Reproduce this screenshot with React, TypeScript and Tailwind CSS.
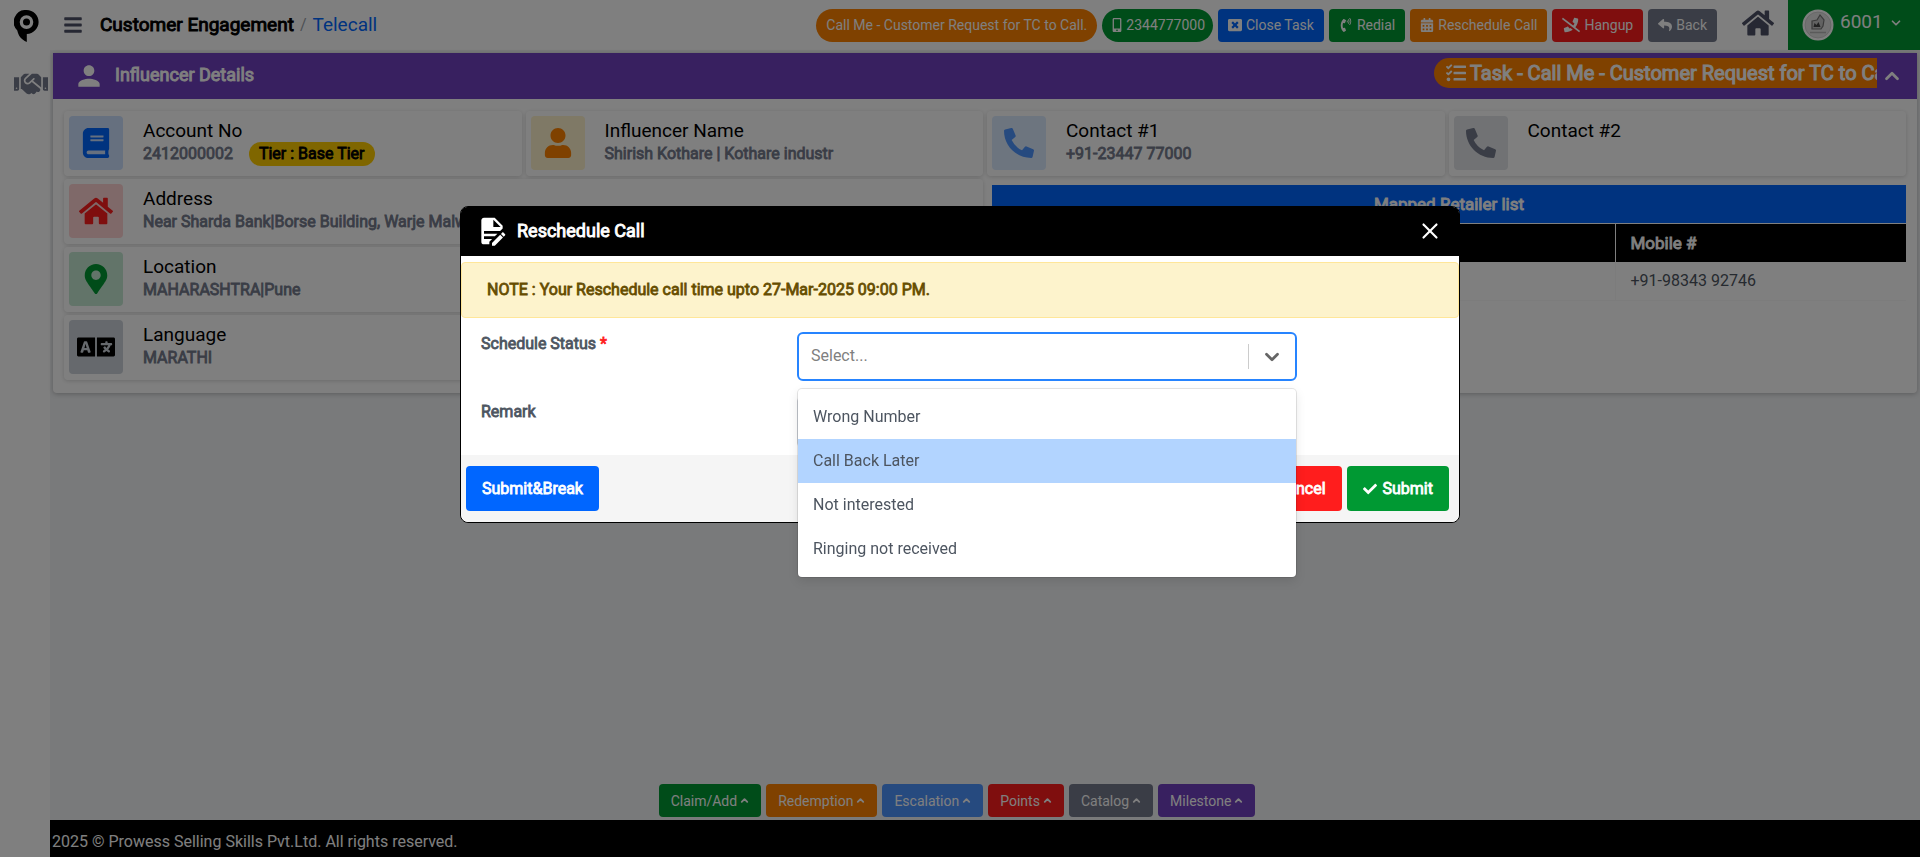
import React, { useState } from "react";
import {
  FaBars, FaBook, FaCalendarAlt, FaCheck, FaHandshake, FaHome, FaLanguage, FaMapMarkerAlt,
  FaMobileAlt, FaPhoneAlt, FaPhoneSlash, FaPhoneVolume, FaReply, FaTasks, FaUser, FaWindowClose, FaTimes,
} from "react-icons/fa";
import { MdPerson } from "react-icons/md";
import { ChevronDown, ChevronUp, X } from "lucide-react";

const statuses = ["Wrong Number", "Call Back Later", "Not interested", "Ringing not received"];

// Regular Roboto thickened with a thin outline, so emphasised text keeps the regular widths.
const strong = "font-normal [-webkit-text-stroke:0.05em_currentColor]";

function Logo() {
  return (
    <svg viewBox="0 0 25 32" className="h-8 w-[25px]" aria-hidden="true">
      <path
        fillRule="evenodd"
        d="M12.5 0C19.300 0 24.600 5.400 24.600 12C24.600 18.600 19.300 23.600 12.800 24.100V32C7 29.500 4.300 25.500 3.300 20.500A12 12 0 0 1 12.500 0ZM12.500 5.300a6.800 6.800 0 1 0 0 13.600a6.800 6.800 0 0 0 0-13.600Z"
        fill="#000"
      />
      <circle cx="12.500" cy="12.100" r="3.500" fill="#000" />
    </svg>
  );
}

function Avatar() {
  return (
    <svg viewBox="0 0 32 32" className="size-8" aria-hidden="true">
      <circle cx="16" cy="16" r="15.500" fill="#fff" />
      <circle cx="16" cy="16" r="13" fill="#e4e4e4" stroke="#c5c5c5" strokeWidth="0.700" />
      <path d="M10 12l5-1 3-5 4 5-1 6-2 3h-9z" fill="#c4c4c4" stroke="#777" strokeWidth="1.200" />
      <path d="M11.500 18l1-4 2 2 2-3 2 5z" fill="#444" />
      <path d="M8 23.500h16" stroke="#b5b5b5" strokeWidth="1.500" />
    </svg>
  );
}

function FileEdit() {
  return (
    <svg viewBox="0 0 24 24" className="size-8" fill="currentColor" aria-hidden="true">
      <path d="M6,2C4.890,2 4,2.890 4,4V20A2,2 0 0,0 6,22H10V20.090L12.090,18H6V16H14.090L16.090,14H6V12H18.090L20,10.090V8L14,2H6M13,3.500L18.500,9H13V3.500M20.150,13C20,13 19.860,13.050 19.750,13.160L18.730,14.180L20.820,16.260L21.840,15.250C22.050,15.030 22.050,14.670 21.840,14.460L20.540,13.160C20.430,13.050 20.290,13 20.150,13M18.140,14.770L12,20.920V23H14.080L20.230,16.850L18.140,14.770Z" />
    </svg>
  );
}

function TopButton({ color, icon, children }: { color: string; icon: React.ReactNode; children: React.ReactNode }) {
  return (
    <button type="button" className={`flex h-[33px] items-center gap-1 rounded px-2.5 text-sm text-white ${color}`}>
      {icon}
      {children}
    </button>
  );
}

function InfoCard({ tint, icon, title, value, wide, children }: {
  tint: string; icon: React.ReactNode; title: string; value?: string; wide?: boolean; children?: React.ReactNode;
}) {
  return (
    <div className={`flex h-[65px] min-w-0 gap-5 rounded bg-white p-[5px] shadow-[0_1px_4px_rgba(0,0,0,0.16)] ${wide ? "col-span-2" : ""}`}>
      <div className={`flex size-[54px] shrink-0 items-center justify-center rounded ${tint}`}>{icon}</div>
      <div className="min-w-0">
        <h3 className="mt-[3px] text-[19px] leading-6 text-black">{title}</h3>
        <div className="flex h-[22px] items-center gap-4 text-base whitespace-nowrap">
          {value && <span className={`text-[#747a8c] ${strong}`}>{value}</span>}
          {children}
        </div>
      </div>
    </div>
  );
}

const actions = [
  { label: "Claim/Add", color: "bg-[#009933]" },
  { label: "Redemption", color: "bg-[#ff8200]" },
  { label: "Escalation", color: "bg-[#4d94ff]" },
  { label: "Points", color: "bg-[#ff1d1d]" },
  { label: "Catalog", color: "bg-[#747a8c]" },
  { label: "Milestone", color: "bg-[#7040c0]" },
];

export default function App() {
  const [status, setStatus] = useState("");
  return (
    <div className="flex min-h-screen bg-[#f2f4f6] font-['Roboto',sans-serif] text-[#4d5560]">
      <aside className="flex w-[50px] shrink-0 flex-col bg-white">
        <a href="#home" aria-label="Prowess home" className="ml-3.5 pt-2.5"><Logo /></a>
        <a href="#engagement" aria-label="Customer Engagement" className="mt-[25px] ml-3.5 text-[#747a8c]">
          <FaHandshake size={34} />
        </a>
      </aside>

      <div className="flex min-w-0 grow flex-col">
        <header className="flex h-[50px] shrink-0 items-center bg-white">
          <button type="button" aria-label="Toggle menu" className="ml-[13px] text-[#4d5066]"><FaBars size={20} /></button>
          <nav aria-label="Breadcrumb" className="ml-[17px] flex items-center gap-1.5 text-[19px] whitespace-nowrap">
            <span className={`text-black ${strong}`}>Customer Engagement</span>
            <span className="text-base text-[#9a9fa8]">/</span>
            <a href="#telecall" className="text-[#0066ff]">Telecall</a>
          </nav>
          <div className="ml-auto flex items-center gap-[5px] whitespace-nowrap">
            <span className="flex h-[33px] items-center rounded-full bg-[#ff8200] px-2.5 text-sm text-white">Call Me - Customer Request for TC to Call.</span>
            <span className="flex h-[33px] items-center gap-0.5 rounded-full bg-[#009933] px-2 text-sm text-white"><FaMobileAlt size={14} />2344777000</span>
            <TopButton color="bg-[#0066ff]" icon={<FaWindowClose size={14} />}>Close Task</TopButton>
            <TopButton color="bg-[#009933]" icon={<FaPhoneVolume size={14} />}>Redial</TopButton>
            <TopButton color="bg-[#ff8200]" icon={<FaCalendarAlt size={14} />}>Reschedule Call</TopButton>
            <TopButton color="bg-[#ff1d1d]" icon={<FaPhoneSlash size={18} />}>Hangup</TopButton>
            <TopButton color="bg-[#747a8c]" icon={<FaReply size={14} />}>Back</TopButton>
          </div>
          <a href="#dashboard" aria-label="Dashboard" className="mr-3.5 ml-[25px] pb-1 text-[#4d5066]"><FaHome size={32} /></a>
          <button type="button" className="flex h-[50px] w-[132px] items-center gap-1.5 bg-[#009933] pl-3.5 text-[19px] text-white">
            <Avatar />
            <span className="pb-1.5">6001</span>
            <ChevronDown size={14} strokeWidth={3} className="mb-1" />
          </button>
        </header>

        <main className="grow px-[3px] pt-[3px]">
          <section className="rounded-b bg-white pb-[13px] shadow-[0_1px_5px_rgba(0,0,0,0.25)]">
            <div className="flex h-[46px] items-center bg-[#7040c0] pr-3.5 text-white">
              <MdPerson size={32} className="ml-5" />
              <h2 className={`ml-2.5 pb-0.5 text-lg ${strong}`}>Influencer Details</h2>
              <div className="mb-1.5 ml-auto w-[443px] overflow-hidden rounded-l-full bg-[#ff8200]">
                <p className={`flex h-[30px] items-center gap-1 pl-3 text-xl whitespace-nowrap ${strong}`}>
                  <FaTasks size={20} className="shrink-0" />
                  Task - Call Me - Customer Request for TC to Call.
                </p>
              </div>
              <button type="button" aria-label="Collapse" className="ml-1"><ChevronUp size={22} strokeWidth={3} /></button>
            </div>

            <div className="mx-[11px] mt-3 grid grid-cols-4 gap-x-1 gap-y-[3px]">
              <InfoCard tint="bg-[#cce0ff]" icon={<FaBook size={30} className="text-[#0066ff]" />} title="Account No" value="2412000002">
                <span className={`rounded-full bg-[#ffcc00] px-2.5 text-black ${strong}`}>Tier : Base Tier</span>
              </InfoCard>
              <InfoCard tint="bg-[#fff3cc]" icon={<FaUser size={30} className="text-[#ff8200]" />} title="Influencer Name" value="Shirish Kothare | Kothare industr" />
              <InfoCard tint="bg-[#dbeaff]" icon={<FaPhoneAlt size={30} className="text-[#4d94ff]" />} title="Contact #1" value="+91-23447 77000" />
              <InfoCard tint="bg-[#e2e4e8]" icon={<FaPhoneAlt size={30} className="text-[#747a8c]" />} title="Contact #2" />
              <InfoCard wide tint="bg-[#ffd2d2]" icon={<FaHome size={34} className="text-[#ff1d1d]" />} title="Address" value="Near Sharda Bank|Borse Building, Warje Malwadi" />
              <div className="col-span-2 row-span-3 pt-1.5 pl-[5px]">
                <table className="w-full border-collapse text-left">
                  <thead className="text-[17px] leading-6 text-white">
                    <tr className="h-[38px] bg-[#0066ff]">
                      <th colSpan={2} className={`text-center ${strong}`}>Mapped Retailer list</th>
                    </tr>
                    <tr className="h-[39px] border-t border-white bg-black">
                      <th aria-label="Retailer" className="border-r border-white" />
                      <th className={`w-[291px] px-[15px] ${strong}`}>Mobile #</th>
                    </tr>
                  </thead>
                  <tbody>
                    <tr className="h-[38px] border-b border-[#f8f8f8]">
                      <td className="border-r border-[#f8f8f8]" />
                      <td className="px-[15px]">+91-98343 92746</td>
                    </tr>
                  </tbody>
                </table>
              </div>
              <InfoCard wide tint="bg-[#c5e8d2]" icon={<FaMapMarkerAlt size={30} className="text-[#009933]" />} title="Location" value="MAHARASHTRA|Pune" />
              <InfoCard wide tint="bg-[#ccd2da]" icon={<FaLanguage size={38} className="text-black" />} title="Language" value="MARATHI" />
            </div>
          </section>
        </main>

        <div className="mr-14 flex justify-center gap-[5px] pb-[3px]">
          {actions.map((a) => (
            <button key={a.label} type="button" className={`flex h-[33px] items-center gap-0.5 rounded px-3 pr-[11px] text-sm text-white ${a.color}`}>
              {a.label}
              <ChevronUp size={11} strokeWidth={4} />
            </button>
          ))}
        </div>
        <footer className="flex h-[37px] shrink-0 items-center bg-black px-0.5 pt-1.5 text-base text-white">
          2025 © Prowess Selling Skills Pvt.Ltd. All rights reserved.
        </footer>
      </div>

      <div className="fixed inset-0 flex items-start justify-center bg-black/50 pt-[206px]">
        <form role="dialog" aria-labelledby="dialog-title" className="w-full max-w-[1000px] rounded-lg border border-black bg-white" onSubmit={(e) => e.preventDefault()}>
          <div className="flex h-[49px] items-center rounded-t-md bg-black pr-4 pb-0.5 pl-[15px] text-white">
            <FileEdit />
            <h2 id="dialog-title" className={`ml-[9px] text-lg ${strong}`}>Reschedule Call</h2>
            <button type="button" aria-label="Close" className="ml-auto"><X size={26} strokeWidth={2} /></button>
          </div>
          <p className={`mt-1.5 rounded border border-[#ffe699] bg-[#fdf3cc] px-[25px] py-[15px] text-base text-[#664d00] ${strong}`}>
            NOTE : Your Reschedule call time upto 27-Mar-2025 09:00 PM.
          </p>
          <div className="grid grid-cols-[316px_1fr] gap-y-4 px-5 pt-3.5 pb-2">
            <label htmlFor="status" className={`text-base ${strong}`}>Schedule Status <span className="text-[#ff1d1d]">*</span></label>
            <div className="relative w-[500px]">
              <select
                id="status"
                value={status}
                onChange={(e) => setStatus(e.target.value)}
                className="h-[49px] w-full appearance-none rounded-md border-2 border-[#2684ff] bg-white px-3 pb-0.5 text-base text-[#808080] outline-none"
              >
                <option value="">Select...</option>
                {statuses.map((s) => <option key={s}>{s}</option>)}
              </select>
              <div className="pointer-events-none absolute inset-y-0 right-3.5 my-3 flex items-center border-l border-[#cccccc] pl-3 text-[#666666]">
                <ChevronDown size={22} strokeWidth={3} />
              </div>
              <ul role="listbox" aria-label="Schedule Status" className="absolute inset-x-px top-full z-10 mt-2 rounded bg-white py-1.5 shadow-[0_0_0_1px_rgba(0,0,0,0.1),0_4px_11px_rgba(0,0,0,0.1)]">
                {statuses.map((s, i) => (
                  <li key={s} role="option" aria-selected={status === s} onClick={() => setStatus(s)} className={`px-[15px] py-2.5 text-base ${i === 1 ? "bg-[#b2d4ff]" : ""}`}>
                    {s}
                  </li>
                ))}
              </ul>
            </div>
            <label htmlFor="remark" className={`pt-[3px] text-base ${strong}`}>Remark</label>
            <textarea id="remark" className="h-[50px] w-[498px] resize-none rounded border border-gray-300" />
          </div>
          <div className="flex h-[67px] items-center gap-[5px] rounded-b-lg bg-[#f5f5f5] pr-2.5 pl-[5px] text-base text-white">
            <button type="submit" className={`mr-auto h-[45px] rounded bg-[#0066ff] px-4 ${strong}`}>Submit&amp;Break</button>
            <button type="button" className={`flex h-[45px] items-center gap-1 rounded bg-[#ff1d1d] px-4 ${strong}`}><FaTimes size={14} />Cancel</button>
            <button type="submit" className={`flex h-[45px] items-center gap-1.5 rounded bg-[#009933] px-4 ${strong}`}><FaCheck size={14} />Submit</button>
          </div>
        </form>
      </div>
    </div>
  );
}
